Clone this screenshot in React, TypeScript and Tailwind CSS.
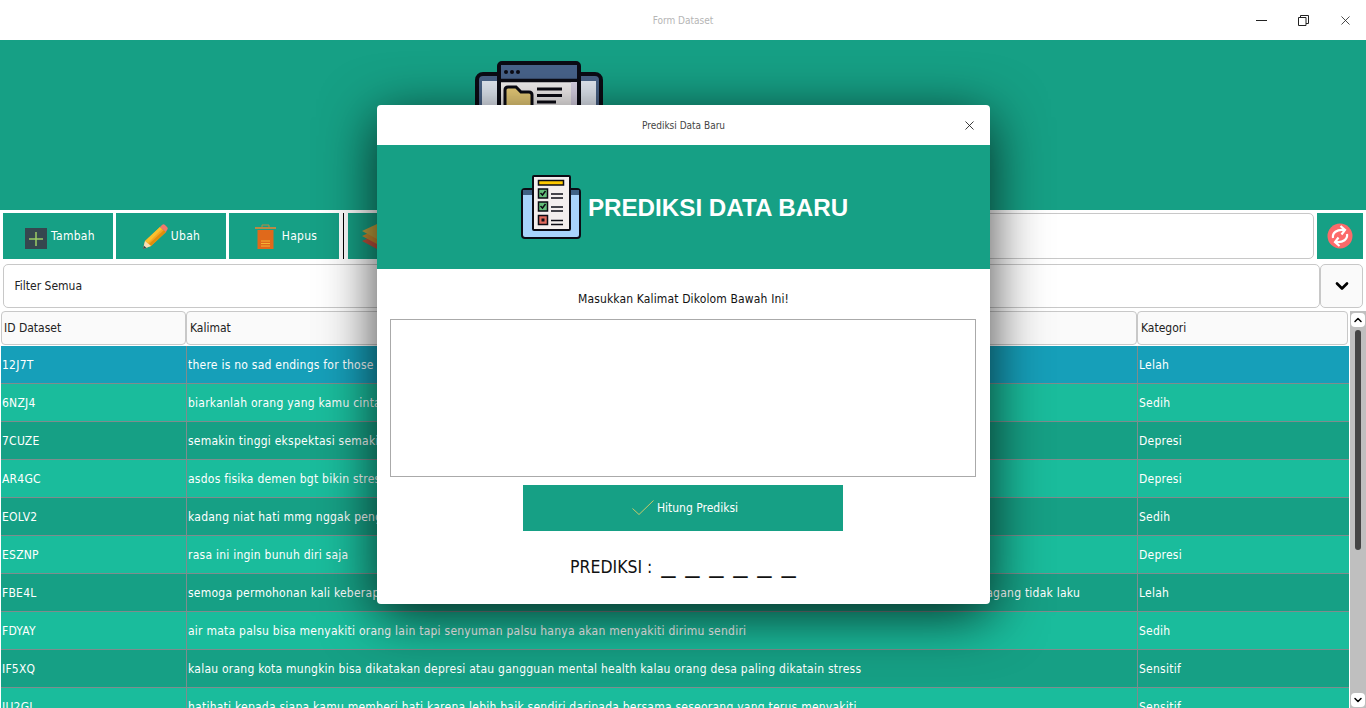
import { ChevronDown, ChevronUp, X } from 'lucide-react'

const rows = [
  { id: '12J7T', text: 'there is no sad endings for those who always believe that tomorrow will be better than today', cat: 'Lelah' },
  { id: '6NZJ4', text: 'biarkanlah orang yang kamu cinta pergi jika memang dia tidak ingin tinggal', cat: 'Sedih' },
  { id: '7CUZE', text: 'semakin tinggi ekspektasi semakin besar juga rasa kecewa yang harus diterima', cat: 'Depresi' },
  { id: 'AR4GC', text: 'asdos fisika demen bgt bikin stress mahasiswanya setiap minggu', cat: 'Depresi' },
  { id: 'EOLV2', text: 'kadang niat hati mmg nggak pengen marah tapi keadaan yang memaksa', cat: 'Sedih' },
  { id: 'ESZNP', text: 'rasa ini ingin bunuh diri saja', cat: 'Depresi' },
  { id: 'FBE4L', text: 'semoga permohonan kali keberapa ini bisa dikabulkan oleh tuhan supaya ku tidak lagi merasa sendiri dan tidak lagi merasa seperti barang dagang tidak laku', cat: 'Lelah' },
  { id: 'FDYAY', text: 'air mata palsu bisa menyakiti orang lain tapi senyuman palsu hanya akan menyakiti dirimu sendiri', cat: 'Sedih' },
  { id: 'IF5XQ', text: 'kalau orang kota mungkin bisa dikatakan depresi atau gangguan mental health kalau orang desa paling dikatain stress', cat: 'Sensitif' },
  { id: 'IU2GJ', text: 'hatihati kepada siapa kamu memberi hati karena lebih baik sendiri daripada bersama seseorang yang terus menyakiti', cat: 'Sensitif' },
]

function rowColor(i: number) {
  if (i === 0) return 'bg-[#169fb9]'
  return i % 2 === 1 ? 'bg-[#1abc9c]' : 'bg-[#16a085]'
}

function PlusIcon() {
  return (
    <svg width="22" height="21" viewBox="0 0 22 21" className="mt-[4px]">
      <rect width="22" height="21" fill="#36474f" />
      <path d="M11 4v14M4 11h14" stroke="#9ccc65" strokeWidth="1.5" />
    </svg>
  )
}

function PencilIcon() {
  return (
    <svg width="26" height="26" viewBox="0 0 26 26" className="mt-[1px]">
      <path d="M1 25l2-8L18 3l6 5L9 22z" fill="#f5a623" />
      <path d="M3 17L18 3l2 2L6 19z" fill="#fbc02d" />
      <path d="M9 22L24 8l-2-2L7 20z" fill="#e08e0b" />
      <path d="M18 3l2-2c1-1 2-1 3 0l2 2c1 1 1 2 0 3l-1 2z" fill="#ef7a6d" />
      <path d="M1 25l2-8 6 5z" fill="#f6dfb8" />
      <path d="M1 25l.8-3.4 2.700 2.300z" fill="#37474f" />
    </svg>
  )
}

function TrashIcon() {
  return (
    <svg width="21" height="26" viewBox="0 0 21 26" className="mt-[1px]">
      <path d="M7 3.500V1h7v2.500" fill="none" stroke="#b98a45" strokeWidth="1" />
      <rect x="0" y="3" width="21" height="2" fill="#b98a45" />
      <path d="M2.500 6h16v19h-16z" fill="#e0691b" />
      <path d="M6 17h9M6 19.500h9M6 22h9" stroke="#f5b533" strokeWidth="1" />
    </svg>
  )
}

function LayersIcon() {
  return (
    <svg width="30" height="25" viewBox="0 0 30 25">
      <path d="M15 10l15 7-15 8-15-8z" fill="#c0533e" />
      <path d="M15 5l15 7-15 8-15-8z" fill="#c98a30" />
      <path d="M15 0l15 7-15 8-15-8z" fill="#c2a23f" />
    </svg>
  )
}

function RefreshIcon() {
  return (
    <svg width="26" height="26" viewBox="0 0 26 26">
      <circle cx="13" cy="13" r="12.500" fill="#fc6a6a" />
      <path d="M6 15c-1-5 4-9 11-8" fill="none" stroke="#fff" strokeWidth="2.200" />
      <path d="M13.500 3l4.500 4-3.500 4.500" fill="none" stroke="#fff" strokeWidth="2.200" />
      <path d="M20 11c1 5-4 9-11 8" fill="none" stroke="#fff" strokeWidth="2.200" />
      <path d="M12.500 23L8 19l3.500-4.500" fill="none" stroke="#fff" strokeWidth="2.200" />
    </svg>
  )
}

function CheckIcon() {
  return (
    <svg width="22" height="16" viewBox="0 0 22 16">
      <path d="M.5 8.500L7 14.500 21.500.5" fill="none" stroke="#c9c96a" strokeWidth="1" />
    </svg>
  )
}

function FolderWindowIcon() {
  return (
    <svg width="128" height="64" viewBox="0 0 128 64" className="block">
      <rect x="2" y="13" width="124" height="60" rx="6" fill="#4a6388" stroke="#0b0b14" strokeWidth="4" />
      <rect x="7" y="20" width="114" height="50" fill="#e6ecf6" />
      <rect x="24" y="2" width="80" height="70" rx="3" fill="#f6f3f3" stroke="#0b0b14" strokeWidth="4" />
      <path d="M26 4h76v14H26z" fill="#48638a" />
      <path d="M24 19.500h80" stroke="#0b0b14" strokeWidth="3.500" />
      <circle cx="31" cy="11" r="2" fill="#0b0b14" />
      <circle cx="37" cy="11" r="2" fill="#0b0b14" />
      <circle cx="43" cy="11" r="2" fill="#0b0b14" />
      <path d="M30 48V29c0-2 1-3 3-3h8l5 5h8c2 0 3 1 3 3v14z" fill="#efd27b" stroke="#0b0b14" strokeWidth="3" />
      <path d="M62 28h25M62 34.500h25M62 41h19" stroke="#0b0b14" strokeWidth="3" />
      <path d="M96 21h6v44h-6z" fill="#dcd5e8" />
    </svg>
  )
}

function ChecklistIcon() {
  return (
    <svg width="60" height="64" viewBox="0 0 60 64" className="block">
      <rect x="1" y="14" width="58" height="49" rx="3" fill="#a8d3fb" stroke="#0b0b14" strokeWidth="2" />
      <path d="M2 15h56v5H2z" fill="#3f6185" />
      <rect x="12" y="1" width="37" height="54" rx="1" fill="#f3eeee" stroke="#0b0b14" strokeWidth="2" />
      <rect x="17.500" y="5.500" width="25" height="4.500" fill="#fdc800" stroke="#0b0b14" strokeWidth="1.500" />
      <rect x="17.500" y="14" width="9" height="9" fill="#63bf7a" stroke="#0b0b14" strokeWidth="1.500" />
      <path d="M19.500 18l2 2 3-4" fill="none" stroke="#0b0b14" strokeWidth="1.500" />
      <rect x="17.500" y="27" width="9" height="9" fill="#63bf7a" stroke="#0b0b14" strokeWidth="1.500" />
      <path d="M19.500 31l2 2 3-4" fill="none" stroke="#0b0b14" strokeWidth="1.500" />
      <rect x="17.500" y="40.500" width="9" height="9" fill="#e0695c" stroke="#0b0b14" strokeWidth="1.500" />
      <rect x="20.500" y="43.500" width="3" height="3" fill="#0b0b14" />
      <path d="M30 19h12M30 23h12M30 32h12M30 36h12M30 45.500h12M30 49.500h12" stroke="#0b0b14" strokeWidth="1.500" />
    </svg>
  )
}

function ToolButton({ icon, label, cls }: { icon: React.ReactNode; label: string; cls: string }) {
  return (
    <div className={`w-[110px] h-[46px] bg-[#16a085] flex items-center justify-center ${cls} text-white`}>
      {icon}
      <span className="tracking-[0.3px]">{label}</span>
    </div>
  )
}

export default function App() {
  return (
    <div className="relative w-[1366px] h-[708px] overflow-hidden bg-white font-['DejaVu_Sans_Condensed','Liberation_Sans',sans-serif] text-[12px]">
      {/* window title */}
      <div className="relative h-10 flex items-center justify-center text-[10px] text-[#b5b5b5]">
        Form Dataset
        <div className="absolute right-0 top-0 h-10 flex items-center">
          <div className="w-[42px] flex justify-center">
            <div className="w-[11px] h-px bg-[#222]" />
          </div>
          <div className="w-[42px] flex justify-center">
            <svg width="11" height="11" viewBox="0 0 11 11" fill="none" stroke="#222">
              <path d="M.5 2.500h7.500v8H.5z" />
              <path d="M2.500 2.500V.5h8v8H8" />
            </svg>
          </div>
          <div className="w-[42px] flex justify-center">
            <X size={15} strokeWidth={1.300} color="#222" />
          </div>
        </div>
      </div>

      {/* banner */}
      <div className="h-[170px] bg-[#16a085] pl-[475px] pt-[21px]">
        <FolderWindowIcon />
      </div>

      {/* toolbar */}
      <div className="flex items-center h-[46px] mt-[3px] pl-[3px] pr-[3px]">
        <div className="flex gap-[3px]">
          <ToolButton icon={<PlusIcon />} label="Tambah" cls="gap-[4px] pl-[4px]" />
          <ToolButton icon={<PencilIcon />} label="Ubah" cls="gap-[3px]" />
          <ToolButton icon={<TrashIcon />} label="Hapus" cls="gap-[6px] pl-[4px]" />
        </div>
        <div className="w-px h-[46px] bg-black ml-[4px]" />
        <div className="ml-[4px] w-[110px] h-[46px] bg-[#16a085] flex items-center pl-[14px] gap-1 text-white">
          <LayersIcon />
          Import
        </div>
        <div className="flex-1 ml-[3px] h-[46px] rounded-[5px] border border-[#c8c8c8] bg-white" />
        <div className="w-[46px] h-[46px] ml-[3px] bg-[#16a085] flex items-center justify-center">
          <RefreshIcon />
        </div>
      </div>

      {/* filter */}
      <div className="flex h-[44px] mt-[5px] pl-[3px] pr-[3px]">
        <div className="flex-1 rounded-[5px] border border-[#c8c8c8] flex items-center pl-[10.500px] text-[#222]">
          Filter Semua
        </div>
        <div className="w-[43px] rounded-[5px] border border-[#c8c8c8] bg-[#fafafa] flex items-center justify-center">
          <ChevronDown size={20} strokeWidth={3.200} color="#000" />
        </div>
      </div>

      {/* table */}
      <div className="flex mt-[3px]">
        <div className="w-[1349px] pl-px">
          <div className="flex h-[34px] text-[#222]">
            <div className="w-[185px] rounded-[4px] border border-[#c8c8c8] bg-[#fafafa] flex items-center pl-[2px]">ID Dataset</div>
            <div className="w-[951px] rounded-[4px] border border-[#c8c8c8] bg-[#fafafa] flex items-center pl-[3px]">Kalimat</div>
            <div className="w-[211px] rounded-[4px] border border-[#c8c8c8] bg-[#fafafa] flex items-center pl-[3px]">Kategori</div>
          </div>
          <div className="mt-px tracking-[0.24px]">
            {rows.map((r, i) => (
              <div key={r.id} className={`flex h-[38px] border-b border-[#7f8c8d] text-white ${rowColor(i)}`}>
                <div className="w-[186px] flex items-center pl-px border-r border-[#7f8c8d]">{r.id}</div>
                <div className="w-[951px] flex items-center pl-px border-r border-[#7f8c8d]">{r.text}</div>
                <div className="w-[210px] flex items-center pl-px">{r.cat}</div>
              </div>
            ))}
          </div>
        </div>
        <div className="w-[16px] ml-auto h-[397px] bg-[#bfbfbf] flex flex-col items-center">
          <div className="w-[14px] h-[14px] mt-[2px] rounded-[4px] bg-white flex items-center justify-center">
            <ChevronUp size={12} strokeWidth={3} color="#000" />
          </div>
          <div className="w-[6px] h-[220px] mt-[3px] rounded bg-[#444]" />
        </div>
      </div>
      <div className="absolute right-px bottom-px w-[14px] h-[14px] rounded-[4px] bg-white flex items-center justify-center">
        <ChevronDown size={12} strokeWidth={3} color="#000" />
      </div>

      {/* dialog */}
      <div className="absolute left-[377px] top-[105px] w-[613px] h-[499px] bg-white rounded-[4px] shadow-[0_12px_55px_rgba(0,0,0,0.75)] flex flex-col overflow-hidden">
        <div className="relative h-10 flex items-center justify-center pt-[1px] text-[10px] text-[#444]">
          Prediksi Data Baru
          <X size={15} strokeWidth={1.300} color="#111" className="absolute right-[13px] top-[13px]" />
        </div>
        <div className="h-[124px] bg-[#16a085] flex items-center justify-center gap-[7px] pl-[2px]">
          <ChecklistIcon />
          <span className="pt-[3px] font-['Liberation_Sans',sans-serif] font-bold text-[24.200px] text-white">PREDIKSI DATA BARU</span>
        </div>
        <p className="mt-[21px] text-center text-[#111] leading-[18px] tracking-[0.14px]">Masukkan Kalimat Dikolom Bawah Ini!</p>
        <div className="mt-[11px] ml-[13px] mr-[14px] h-[158px] border border-[#aaaaaa]" />
        <div className="mt-2 ml-[146px] w-[320px] h-[46px] bg-[#16a085] flex items-center justify-center gap-[3px] pl-[4px] text-white">
          <CheckIcon />
          Hitung Prediksi
        </div>
        <div className="mt-[23px] ml-[193px] flex items-baseline gap-[9px] text-[17.500px] text-[#111]">
          <span>PREDIKSI :</span>
          <span className="font-['Liberation_Sans',sans-serif] text-[25px] leading-[20px] tracking-[1.600px]">_ _ _ _ _ _</span>
        </div>
      </div>
    </div>
  )
}
